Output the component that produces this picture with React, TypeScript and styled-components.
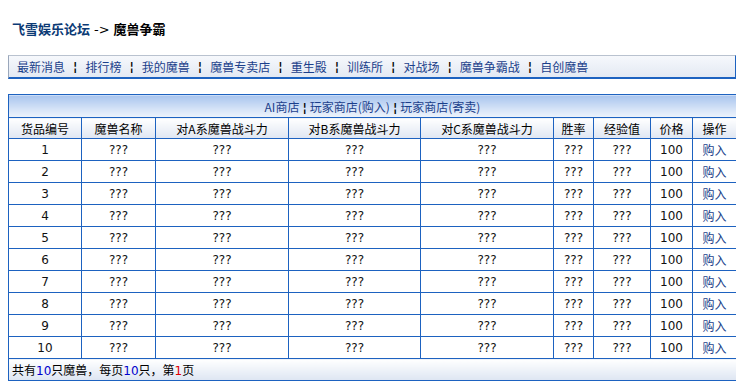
import React from "react";
import styled, { createGlobalStyle } from "styled-components";

const lineColor = "#1d62c0";
const linkColor = "#1b3f8b";

const GlobalStyle = createGlobalStyle`
  body {
    margin: 8px;
    background: #ffffff;
    font-family: "DejaVu Sans", "Noto Sans CJK SC", sans-serif;
    font-size: 12px;
    color: #000;
  }
`;

const Crumb = styled.div`
  margin-top: 12px;
  padding-left: 4px;
  height: 17px;
  line-height: 17px;
  font-family: "Noto Sans CJK SC", sans-serif;
  font-size: 13px;
  font-weight: bold;
  color: #000;
  .forum {
    color: #0b3a75;
  }
  .arrow {
    font-family: "DejaVu Sans", sans-serif;
    font-weight: normal;
    margin: 0 4px;
  }
`;

const NavBar = styled.div`
  margin-top: 18px;
  height: 21px;
  display: flex;
  align-items: center;
  padding-left: 8px;
  border-top: 1px solid #b9c2cf;
  border-left: 1px solid #9aa7bb;
  border-right: 1px solid ${lineColor};
  border-bottom: 2px solid ${lineColor};
  background: linear-gradient(#f6f8fc, #e3e9f3);
  font-family: "Noto Sans CJK SC", sans-serif;
  font-size: 12px;
`;

const NavLink = styled.a`
  color: ${linkColor};
  text-decoration: none;
  white-space: nowrap;
`;

const Sep = styled.span<{ $gap?: number }>`
  display: inline-block;
  margin: 0 ${(p) => p.$gap ?? 8}px;
  font-family: "DejaVu Sans", sans-serif;
  font-weight: 900;
  font-size: 12px;
  color: #000;
`;

const Grid = styled.table`
  margin-top: 15px;
  width: 100%;
  border-collapse: collapse;
  table-layout: fixed;
  border: 1px solid ${lineColor};
  td,
  th {
    border: 1px solid ${lineColor};
    text-align: center;
    padding: 0;
    font-weight: normal;
    white-space: nowrap;
  }
`;

const TitleCell = styled.th`
  height: 22px;
  background: linear-gradient(#a8c4ee, #dbe7f8 70%, #eef3fb);
  font-family: "Noto Sans CJK SC", sans-serif;
  font-size: 12px;
  a {
    color: ${linkColor};
    text-decoration: none;
  }
`;

const HeadCell = styled.th`
  height: 20px;
  background: linear-gradient(#ffffff, #dfe6f2);
  font-family: "Noto Sans CJK SC", sans-serif;
  font-size: 12px;
  color: #000;
`;

const Cell = styled.td<{ $cjk?: boolean }>`
  height: 21px;
  font-family: ${(p) =>
    p.$cjk ? `"Noto Sans CJK SC", sans-serif` : `"DejaVu Sans", sans-serif`};
  font-size: 12px;
  color: #111;
  a {
    color: ${linkColor};
    text-decoration: none;
  }
`;

const FootCell = styled.td`
  height: 21px;
  text-align: left !important;
  padding-left: 3px !important;
  background: linear-gradient(#ffffff, #dde5f2);
  font-family: "Noto Sans CJK SC", sans-serif;
  font-size: 12px;
`;

const Num = styled.span<{ $red?: boolean }>`
  font-family: "DejaVu Sans", sans-serif;
  color: ${(p) => (p.$red ? "#e00000" : "#0000cc")};
`;

const navItems = [
  "最新消息",
  "排行榜",
  "我的魔兽",
  "魔兽专卖店",
  "重生殿",
  "训练所",
  "对战场",
  "魔兽争霸战",
  "自创魔兽",
];

const columns = [
  { title: "货品编号", width: 73 },
  { title: "魔兽名称", width: 74 },
  { title: "对A系魔兽战斗力", width: 133 },
  { title: "对B系魔兽战斗力", width: 132 },
  { title: "对C系魔兽战斗力", width: 133 },
  { title: "胜率", width: 40 },
  { title: "经验值", width: 57 },
  { title: "价格", width: 42 },
  { title: "操作", width: 44 },
];

const rows = Array.from({ length: 10 }, (_, i) => i + 1);

export default function App() {
  return (
    <>
      <GlobalStyle />
      <Crumb>
        <span className="forum">飞雪娱乐论坛</span>
        <span className="arrow">-&gt;</span>
        魔兽争霸
      </Crumb>
      <NavBar>
        {navItems.map((item, i) => (
          <React.Fragment key={item}>
            {i > 0 && <Sep>¦</Sep>}
            <NavLink href="#">{item}</NavLink>
          </React.Fragment>
        ))}
      </NavBar>
      <Grid>
        <colgroup>
          {columns.map((c) => (
            <col key={c.title} style={{ width: c.width }} />
          ))}
        </colgroup>
        <thead>
          <tr>
            <TitleCell colSpan={9}>
              <a href="#">AI商店</a>
              <Sep $gap={3}>¦</Sep>
              <a href="#">玩家商店(购入)</a>
              <Sep $gap={3}>¦</Sep>
              <a href="#">玩家商店(寄卖)</a>
            </TitleCell>
          </tr>
          <tr>
            {columns.map((c) => (
              <HeadCell key={c.title}>{c.title}</HeadCell>
            ))}
          </tr>
        </thead>
        <tbody>
          {rows.map((n) => (
            <tr key={n}>
              <Cell>{n}</Cell>
              <Cell>???</Cell>
              <Cell>???</Cell>
              <Cell>???</Cell>
              <Cell>???</Cell>
              <Cell>???</Cell>
              <Cell>???</Cell>
              <Cell>100</Cell>
              <Cell $cjk>
                <a href="#">购入</a>
              </Cell>
            </tr>
          ))}
          <tr>
            <FootCell colSpan={9}>
              共有<Num>10</Num>只魔兽，每页<Num>10</Num>只，第<Num $red>1</Num>页
            </FootCell>
          </tr>
        </tbody>
      </Grid>
    </>
  );
}
